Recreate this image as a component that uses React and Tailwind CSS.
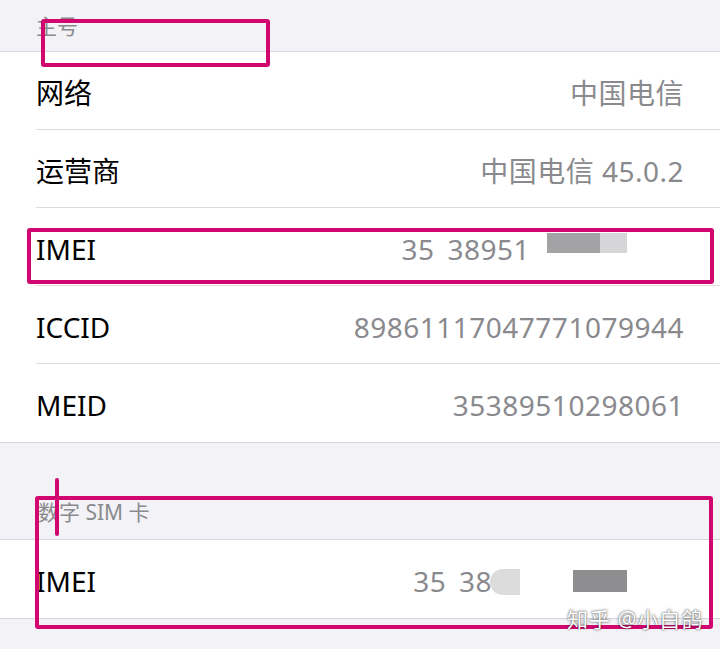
import React from "react";

const font = { fontFamily: '"Noto Sans", "Noto Sans CJK SC", sans-serif' };

const Row = ({ label, children, last }) => (
  <div className="h-[78px] pl-[36px] bg-white">
    <div
      className={
        "h-full flex items-center justify-between pr-[36px] pt-[4px] " +
        (last ? "" : "border-b border-[#dcdce0]")
      }
    >
      <span className="text-[28px] text-black leading-none">{label}</span>
      <span className="text-[28px] text-[#8a8a8e] leading-none tracking-[0.5px] flex items-center">
        {children}
      </span>
    </div>
  </div>
);

const Box = ({ className }) => (
  <div className={"absolute border-[4px] border-[#d1066f] rounded-[3px] " + className} />
);

export default function App() {
  return (
    <div className="relative w-[720px] h-[649px] bg-[#f2f2f7] overflow-hidden" style={font}>
      <div className="h-[52px] flex items-end pl-[36px] pb-[14px] border-b border-[#d6d6da]">
        <span className="text-[21px] leading-none text-[#8a8a8e]">主号</span>
      </div>
      <div className="border-b border-[#d6d6da]">
        <Row label="网络">中国电信</Row>
        <Row label="运营商">中国电信 45.0.2</Row>
        <Row label="IMEI">
          <span className="[word-spacing:5px]">35 38951</span>
          <span className="ml-[17px] mb-[12px] w-[53px] h-[20px] bg-[#a3a3a5]" />
          <span className="mb-[12px] w-[27px] h-[20px] bg-[#d6d6d8]" />
          <span className="w-[57px]" />
        </Row>
        <Row label="ICCID">89861117047771079944</Row>
        <Row label="MEID" last>35389510298061</Row>
      </div>
      <div className="h-[97px] flex items-end pl-[38px] pb-[16px] border-b border-[#d6d6da]">
        <span className="text-[21px] leading-none text-[#8a8a8e]">数字 SIM 卡</span>
      </div>
      <div className="border-b border-[#d6d6da]">
        <Row label="IMEI" last>
          <span className="[word-spacing:5px]">35 38</span>
          <span className="-ml-[2px] mt-[2px] w-[30px] h-[26px] rounded-l-[13px] bg-[#dcdcdd]" />
          <span className="ml-[53px] w-[54px] h-[22px] bg-[#8e8e90]" />
          <span className="w-[57px]" />
        </Row>
      </div>

      <Box className="left-[41px] top-[19px] w-[229px] h-[48px]" />
      <Box className="left-[27px] top-[228px] w-[687px] h-[56px]" />
      <Box className="left-[35px] top-[496px] w-[678px] h-[133px]" />
      <div className="absolute left-[55px] top-[478px] w-[4px] h-[58px] rounded-full bg-[#d1066f]" />

      <div
        className="absolute left-[567px] top-[609px] text-[21px] leading-none text-white tracking-[1px]"
        style={{ textShadow: "0 0 3px rgba(0,0,0,0.6), 0 0 1px rgba(0,0,0,0.5)" }}
      >
        知乎 @小白鸽
      </div>
    </div>
  );
}
